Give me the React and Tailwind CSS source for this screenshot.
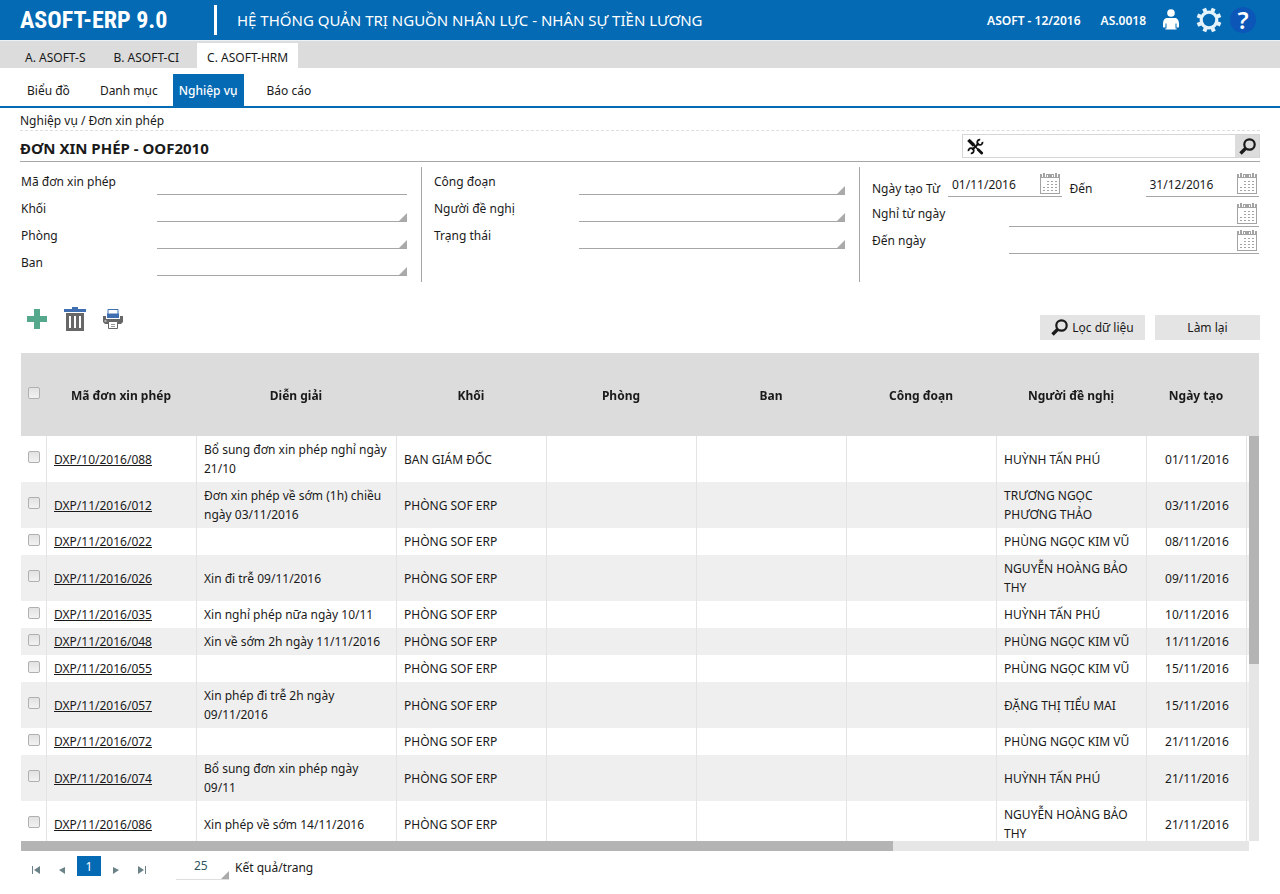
import { useState } from 'react';

const SYSTEMS = ['A. ASOFT-S', 'B. ASOFT-CI', 'C. ASOFT-HRM'];
const MENU = ['Biểu đồ', 'Danh mục', 'Nghiệp vụ', 'Báo cáo'];

const COLUMNS = [
  { label: 'Mã đơn xin phép', width: 'w-[150px]' },
  { label: 'Diễn giải', width: 'w-[200px]' },
  { label: 'Khối', width: 'w-[150px]' },
  { label: 'Phòng', width: 'w-[150px]' },
  { label: 'Ban', width: 'w-[150px]' },
  { label: 'Công đoạn', width: 'w-[150px]' },
  { label: 'Người đề nghị', width: 'w-[150px]' },
  { label: 'Ngày tạo', width: 'w-[100px]' },
];

const ROWS = [
  { id: 'DXP/10/2016/088', note: 'Bổ sung đơn xin phép nghỉ ngày 21/10', block: 'BAN GIÁM ĐỐC', by: 'HUỲNH TẤN PHÚ', date: '01/11/2016' },
  { id: 'DXP/11/2016/012', note: 'Đơn xin phép về sớm (1h) chiều ngày 03/11/2016', block: 'PHÒNG SOF ERP', by: 'TRƯƠNG NGỌC PHƯƠNG THẢO', date: '03/11/2016' },
  { id: 'DXP/11/2016/022', note: '', block: 'PHÒNG SOF ERP', by: 'PHÙNG NGỌC KIM VŨ', date: '08/11/2016' },
  { id: 'DXP/11/2016/026', note: 'Xin đi trễ 09/11/2016', block: 'PHÒNG SOF ERP', by: 'NGUYỄN HOÀNG BẢO THY', date: '09/11/2016' },
  { id: 'DXP/11/2016/035', note: 'Xin nghỉ phép nữa ngày 10/11', block: 'PHÒNG SOF ERP', by: 'HUỲNH TẤN PHÚ', date: '10/11/2016' },
  { id: 'DXP/11/2016/048', note: 'Xin về sớm 2h ngày 11/11/2016', block: 'PHÒNG SOF ERP', by: 'PHÙNG NGỌC KIM VŨ', date: '11/11/2016' },
  { id: 'DXP/11/2016/055', note: '', block: 'PHÒNG SOF ERP', by: 'PHÙNG NGỌC KIM VŨ', date: '15/11/2016' },
  { id: 'DXP/11/2016/057', note: 'Xin phép đi trễ 2h ngày 09/11/2016', block: 'PHÒNG SOF ERP', by: 'ĐẶNG THỊ TIỂU MAI', date: '15/11/2016' },
  { id: 'DXP/11/2016/072', note: '', block: 'PHÒNG SOF ERP', by: 'PHÙNG NGỌC KIM VŨ', date: '21/11/2016' },
  { id: 'DXP/11/2016/074', note: 'Bổ sung đơn xin phép ngày 09/11', block: 'PHÒNG SOF ERP', by: 'HUỲNH TẤN PHÚ', date: '21/11/2016' },
  { id: 'DXP/11/2016/086', note: 'Xin phép về sớm 14/11/2016', block: 'PHÒNG SOF ERP', by: 'NGUYỄN HOÀNG BẢO THY', date: '21/11/2016' },
];

/* ── Icons ── */

function PersonIcon() {
  return (
    <svg width="18" height="22" viewBox="0 0 18 22" fill="#fff">
      <circle cx="9" cy="4" r="3.800" />
      <path d="M5 9h8c2.500 0 4 2.500 4 6v2.500c0 1.500-2 1.500-2.500 0v3H3.500v-3C3 19 1 19 1 17.500V15c0-3.500 1.500-6 4-6z" />
      <path d="M4 14.500v5M14 14.500v5" stroke="#046ab4" strokeWidth="1" />
    </svg>
  );
}

function GearIcon() {
  return (
    <svg width="26" height="26" viewBox="-13 -13 26 26" fill="none" stroke="#e4f3fb">
      <circle r="7.800" strokeWidth="3.200" />
      {[22, 67, 112, 157, 202, 247, 292, 337].map(a => (
        <path key={a} d="M0 -8.500V-12.500" strokeWidth="4" transform={`rotate(${a})`} />
      ))}
    </svg>
  );
}

function SearchIcon() {
  return (
    <svg width="17" height="17" viewBox="0 0 17 17" fill="none" stroke="#1a1a1a">
      <circle cx="10.500" cy="6.500" r="5.200" strokeWidth="2.200" />
      <path d="M6.500 10.500L1.500 15.500" strokeWidth="3.400" />
    </svg>
  );
}

function ToolsIcon() {
  return (
    <svg width="17" height="17" viewBox="0 0 18 18" fill="none" stroke="#111">
      <path d="M1.500 2L7.500 8" strokeWidth="3.600" />
      <path d="M7 7.500L12 12.500" strokeWidth="1.400" />
      <path d="M12 12.500L15.500 16" strokeWidth="3" strokeLinecap="round" />
      <path d="M12.500 5.500L5.500 12.500" strokeWidth="2.200" />
      <path d="M14 1.800A2.800 2.800 0 1 0 16.400 4.200" strokeWidth="1.900" />
      <path d="M4 16.200A2.800 2.800 0 1 0 1.600 13.800" strokeWidth="1.900" />
    </svg>
  );
}

function CalendarIcon() {
  return (
    <svg width="20" height="21" viewBox="0 0 20 21" fill="#a3a3a3" shapeRendering="crispEdges">
      <path d="M0 1h20v20H0zM1 5v15h18V5z" fillRule="evenodd" />
      <path d="M3 0h2v3H3zM15 0h2v3h-2z" />
      <path d="M2 1h1v3H2zM5 1h1v3H5zM14 1h1v3h-1zM17 1h1v3h-1zM7 2h1v2H7zM12 2h1v2h-1z" fill="#fff" />
      {[8, 11, 14, 17].map(y =>
        [3, 7, 11, 15].map(x => (x === 3 && y < 14 ? null : <rect key={`${x}-${y}`} x={x} y={y} width="2" height="1" />))
      )}
    </svg>
  );
}

function PlusIcon() {
  return (
    <svg width="20" height="20" viewBox="0 0 20 20">
      <path d="M7 0h6v7h7v6h-7v7H7v-7H0V7h7z" fill="#55a88c" />
    </svg>
  );
}

function TrashIcon() {
  return (
    <svg width="22" height="24" viewBox="0 0 22 24" shapeRendering="crispEdges">
      <path d="M8 0h6v2h8v3H0V2h8z" fill="#3f6fb0" />
      <path d="M2 6h18v18H2zM5 9v12h2V9zM10 9v12h2V9zM15 9v12h2V9z" fill="#676767" fillRule="evenodd" />
    </svg>
  );
}

function PrinterIcon() {
  return (
    <svg width="20" height="20" viewBox="0 0 20 20">
      <path d="M5 .500h10v5H5z" fill="#fff" stroke="#3f6fb0" />
      <path d="M4 4.500h12V9H4z" fill="#3f6fb0" />
      <path d="M0 7h3v3h14V7h3v6l-2 2h-3v-2H5v2H2l-2-2z" fill="#676767" />
      <path d="M1.500 11.500h2v1h-2z" fill="#fff" />
      <path d="M5.500 12.500h9v7h-9z" fill="#fff" stroke="#676767" />
      <path d="M8 15.500h4M8 17.500h4" stroke="#999" />
    </svg>
  );
}

function Corner() {
  return (
    <svg className="absolute right-0 bottom-0 pointer-events-none" width="8" height="8" viewBox="0 0 8 8">
      <path d="M8 0v8H0z" fill="#aaa" />
    </svg>
  );
}

/* ── Filter fields ── */

function Field({ id, label, labelWidth, select }) {
  return (
    <div className="flex h-[27px]">
      <label htmlFor={id} className={`${labelWidth} shrink-0 pt-1`}>{label}</label>
      <div className="relative flex-1 min-w-0 border-b border-[#a6a6a6]">
        {select ? (
          <>
            <select id={id} className="w-full h-full appearance-none bg-transparent outline-none px-1">
              <option value=""></option>
            </select>
            <Corner />
          </>
        ) : (
          <input id={id} type="text" className="w-full h-full bg-transparent outline-none px-1" />
        )}
      </div>
    </div>
  );
}

function DateInput({ id, value = '' }) {
  return (
    <div className="flex-1 min-w-0 flex items-end border-b border-[#a6a6a6]">
      <input id={id} type="text" defaultValue={value} className="flex-1 min-w-0 h-6 bg-transparent outline-none pl-1" />
      <button type="button" aria-label="Chọn ngày" className="pb-[2px] pr-[2px]">
        <CalendarIcon />
      </button>
    </div>
  );
}

function Check({ label }) {
  return (
    <input
      type="checkbox"
      aria-label={label}
      className="block size-3 mx-auto mb-1 appearance-none rounded-xs border border-[#b0b0b0] bg-linear-to-b from-[#e2e2e2] to-[#f2f2f2] checked:bg-[#046ab4]"
    />
  );
}

function PagerButton({ label, d }) {
  return (
    <button type="button" aria-label={label} className="w-[26px] h-5 flex items-center justify-center">
      <svg width="8" height="8" viewBox="0 0 8 8" fill="#6b8388"><path d={d} /></svg>
    </button>
  );
}

export default function App() {
  const [system, setSystem] = useState('C. ASOFT-HRM');
  const [menu, setMenu] = useState('Nghiệp vụ');

  return (
    <div className="min-h-screen bg-white text-[#1a1a1a] text-[12px] leading-[19px] font-['Noto_Sans',sans-serif]">
      {/* ── Top bar ── */}
      <header className="h-10 bg-[#046ab4] text-white flex items-center pl-5 pr-6">
        <div className="w-[194px] shrink-0 text-[24px] font-bold font-['Liberation_Sans_Narrow','Roboto_Condensed','Liberation_Sans',sans-serif]">
          ASOFT-ERP 9.0
        </div>
        <div className="w-[3px] h-[30px] bg-white" />
        <h1 className="ml-5 flex-1 text-[15px] whitespace-nowrap">HỆ THỐNG QUẢN TRỊ NGUỒN NHÂN LỰC - NHÂN SỰ TIỀN LƯƠNG</h1>
        <span className="font-semibold">ASOFT - 12/2016</span>
        <span className="font-semibold ml-5">AS.0018</span>
        <button type="button" aria-label="Tài khoản" className="ml-4"><PersonIcon /></button>
        <button type="button" aria-label="Thiết lập" className="ml-4"><GearIcon /></button>
        <button type="button" aria-label="Trợ giúp" className="ml-2 size-[26px] rounded-full bg-[#0c56b8] text-[24px] leading-6 font-semibold">?</button>
      </header>

      {/* ── System tabs ── */}
      <nav className="h-7 bg-[#dcdcdc] border-t border-[#e8f1f8] flex items-end gap-2 pl-[15px]">
        {SYSTEMS.map(s => (
          <button
            key={s}
            type="button"
            onClick={() => setSystem(s)}
            className={`h-[25px] px-[10px] pt-1 ${s === system ? 'bg-white' : ''}`}
          >
            {s}
          </button>
        ))}
      </nav>

      {/* ── Menu ── */}
      <nav className="h-10 border-b-2 border-[#046ab4] flex items-end pl-3">
        {MENU.map(m => (
          <button
            key={m}
            type="button"
            onClick={() => setMenu(m)}
            className={`h-8 ${m === menu ? 'px-[6px] mr-2 bg-[#046ab4] text-white font-medium' : 'px-[15px]'}`}
          >
            {m}
          </button>
        ))}
      </nav>

      <main className="px-5">
        <div className="h-[23px] pt-[3px] border-b border-dashed border-[#dedede]">
          <a href="#nghiep-vu">Nghiệp vụ</a> / <a href="#don-xin-phep">Đơn xin phép</a>
        </div>
        <div className="h-[31px] flex items-center justify-between border-b border-[#a6a6a6]">
          <h2 className="text-[15px] font-bold pt-1">ĐƠN XIN PHÉP - OOF2010</h2>
          <div className="flex w-[298px] h-6 border border-[#d6d6d6]">
            <button type="button" aria-label="Tùy chọn tìm kiếm" className="px-1"><ToolsIcon /></button>
            <input type="search" aria-label="Tìm kiếm" className="flex-1 min-w-0 outline-none" />
            <button type="button" aria-label="Tìm" className="w-6 flex items-center justify-center bg-[#dcdcdc]"><SearchIcon /></button>
          </div>
        </div>

        {/* ── Filters ── */}
        <form className="mt-[5px] grid grid-cols-[minmax(0,402fr)_minmax(0,438fr)_minmax(0,400fr)] h-[115px]">
          <div className="border-r border-[#a6a6a6] pl-px pr-[14px] pt-px">
            <Field id="ma" label="Mã đơn xin phép" labelWidth="w-[136px]" />
            <Field id="khoi" label="Khối" labelWidth="w-[136px]" select />
            <Field id="phong" label="Phòng" labelWidth="w-[136px]" select />
            <Field id="ban" label="Ban" labelWidth="w-[136px]" select />
          </div>
          <div className="border-r border-[#a6a6a6] pl-3 pr-[14px] pt-px">
            <Field id="congdoan" label="Công đoạn" labelWidth="w-[145px]" select />
            <Field id="nguoi" label="Người đề nghị" labelWidth="w-[145px]" select />
            <Field id="trangthai" label="Trạng thái" labelWidth="w-[145px]" select />
          </div>
          <div className="pl-3 pr-px">
            <div className="flex h-[30px]">
              <label htmlFor="tu" className="w-[76px] shrink-0 pt-3">Ngày tạo Từ</label>
              <DateInput id="tu" value="01/11/2016" />
              <label htmlFor="den" className="w-[84px] shrink-0 pl-2 pt-3">Đến</label>
              <DateInput id="den" value="31/12/2016" />
            </div>
            <div className="flex h-[30px]">
              <label htmlFor="nghitu" className="w-[137px] shrink-0 pt-[7px]">Nghỉ từ ngày</label>
              <DateInput id="nghitu" />
            </div>
            <div className="flex h-[27px]">
              <label htmlFor="denngay" className="w-[137px] shrink-0 pt-1">Đến ngày</label>
              <DateInput id="denngay" />
            </div>
          </div>
        </form>

        {/* ── Toolbar ── */}
        <div className="mt-[25px] flex items-start">
          <div className="flex items-center gap-[17px] pl-[7px]">
            <button type="button" aria-label="Thêm"><PlusIcon /></button>
            <button type="button" aria-label="Xóa"><TrashIcon /></button>
            <button type="button" aria-label="In"><PrinterIcon /></button>
          </div>
          <div className="ml-auto mt-2 flex gap-[10px]">
            <button type="button" className="w-[105px] h-[25px] bg-[#e4e4e4] flex items-center justify-center gap-1">
              <SearchIcon />Lọc dữ liệu
            </button>
            <button type="button" className="w-[105px] h-[25px] bg-[#e4e4e4]">Làm lại</button>
          </div>
        </div>

        {/* ── Grid ── */}
        <div className="mt-[13px] mx-px">
          <div className="flex h-[488px]">
            <div className="flex-1 min-w-0 overflow-auto [scrollbar-width:none]">
              <table className="table-fixed w-full min-w-[1225px] border-separate border-spacing-0">
                <thead className="sticky top-0 z-10">
                  <tr className="h-[83px] bg-[#dcdcdc]">
                    <th className="w-[25px]"><Check label="Chọn tất cả" /></th>
                    {COLUMNS.map(c => (
                      <th key={c.label} className={`${c.width} font-bold pt-[2px]`}>{c.label}</th>
                    ))}
                    <th></th>
                  </tr>
                </thead>
                <tbody>
                  {ROWS.map(r => (
                    <tr key={r.id} className="h-[27px] even:bg-[#efefef] [&>td+td]:border-l [&>td+td]:border-[#e4e4e4] [&>td+td]:pl-[7px] [&>td+td]:pr-[6px] [&>td]:py-1 [&>td:last-child]:p-0">
                      <td><Check label={r.id} /></td>
                      <td><a href={`#${r.id}`} className="underline">{r.id}</a></td>
                      <td>{r.note}</td>
                      <td>{r.block}</td>
                      <td></td>
                      <td></td>
                      <td></td>
                      <td>{r.by}</td>
                      <td className="text-center">{r.date}</td>
                      <td></td>
                    </tr>
                  ))}
                </tbody>
              </table>
            </div>
            {/* vertical scrollbar */}
            <div className="w-[10px] flex flex-col">
              <div className="h-[83px] bg-[#dcdcdc]" />
              <div className="flex-1 bg-[#e6e6e6]">
                <div className="h-[228px] bg-[#b4b4b4]" />
              </div>
            </div>
          </div>
          {/* horizontal scrollbar */}
          <div className="h-[10px] mr-[10px] bg-[#e6e6e6]">
            <div className="h-full w-[71%] bg-[#b4b4b4]" />
          </div>
        </div>

        {/* ── Pager ── */}
        <div className="flex items-start pl-[3px] pt-[5px]">
          <div className="flex pt-1">
            <PagerButton label="Trang đầu" d="M0 0h1v8H0zM8 0v8L2 4z" />
            <PagerButton label="Trang trước" d="M7 1v7L1 4z" />
          </div>
          <button type="button" className="w-6 h-5 ml-[2px] bg-[#046ab4] text-white">1</button>
          <div className="flex pt-1 ml-[2px]">
            <PagerButton label="Trang sau" d="M1 1v7l6-4z" />
            <PagerButton label="Trang cuối" d="M7 0h1v8H7zM0 0v8l6-4z" />
          </div>
          <div className="relative ml-[21px] w-[53px] h-6 border-b border-[#dedede]">
            <select id="pagesize" defaultValue="25" className="w-full h-[18px] appearance-none bg-transparent outline-none pl-[18px] text-[#2f5560]">
              <option>25</option>
              <option>50</option>
            </select>
            <Corner />
          </div>
          <label htmlFor="pagesize" className="pl-[6px] pt-[2px]">Kết quả/trang</label>
        </div>
      </main>
    </div>
  );
}
